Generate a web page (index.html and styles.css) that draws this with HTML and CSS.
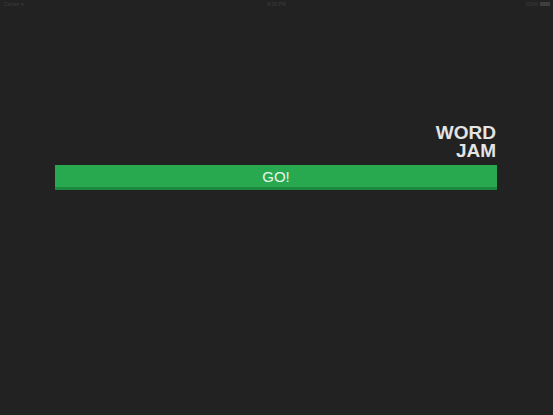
FILE: index.html
```html
<!DOCTYPE html>
<html>
<head>
<meta charset="utf-8">
<link rel="stylesheet" href="styles.css">
</head>
<body>
<div class="screen">
  <div class="status">
    <div class="status-left">Carrier <span class="wifi">&#9662;</span></div>
    <div class="status-center">8:26 PM</div>
    <div class="status-right">100% <span class="battery"><span class="battery-fill"></span></span></div>
  </div>
  <div class="content">
    <div class="title">WORD<br>JAM</div>
    <button class="go">GO!</button>
  </div>
</div>
</body>
</html>
```
FILE: styles.css
```css
html, body {
  margin: 0;
  padding: 0;
  background: #222222;
}
.screen {
  width: 553px;
  height: 415px;
  background: #222222;
  font-family: "Liberation Sans", Arial, sans-serif;
  overflow: hidden;
}
.status {
  height: 8px;
  display: flex;
  align-items: center;
  justify-content: space-between;
  padding: 0 3px 0 4px;
  font-size: 5px;
  color: #3e3e3e;
  position: relative;
}
.status-center {
  position: absolute;
  left: 0;
  right: 0;
  text-align: center;
}
.status-left, .status-right {
  display: flex;
  align-items: center;
  gap: 2px;
}
.wifi {
  font-size: 5px;
}
.battery {
  display: inline-block;
  width: 10px;
  height: 4px;
  border: 1px solid #3e3e3e;
  box-sizing: border-box;
  position: relative;
  z-index: 1;
}
.battery-fill {
  display: block;
  width: 100%;
  height: 100%;
  background: #3e3e3e;
}
.content {
  padding: 116px 56px 0 55px;
  display: flex;
  flex-direction: column;
}
.title {
  text-align: right;
  font-weight: bold;
  font-size: 19px;
  line-height: 18px;
  color: #e4e4e4;
  padding-right: 1px;
}
.go {
  margin-top: 5px;
  height: 25px;
  border: none;
  border-bottom: 3px solid #1c8a3e;
  background: #28a84f;
  color: #e9f7ec;
  font-family: "Liberation Sans", Arial, sans-serif;
  font-size: 15px;
  padding: 1px 0 0 0;
  box-sizing: border-box;
  border-radius: 0;
}
```
